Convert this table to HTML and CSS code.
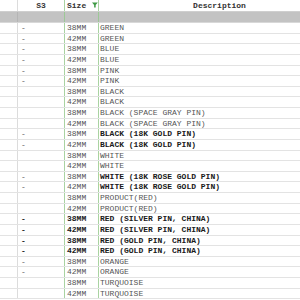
FILE: index.html
```html
<!DOCTYPE html>
<html>
<head>
<meta charset="utf-8">
<link rel="stylesheet" href="styles.css">
</head>
<body>
<div class="sheet">
  <div class="row head">
    <div class="c0"></div>
    <div class="c1 center">S3</div>
    <div class="c2">Size <svg class="filter" width="6" height="6" viewBox="0 0 6 6"><path d="M0 0.5 H6 L3.8 3 V5.5 H2.2 V3 Z" fill="#3f9a45"/></svg></div>
    <div class="c3 desc-head">Description</div>
  </div>
  <div class="row band">
    <div class="c0"></div><div class="c1"></div><div class="c2"></div><div class="c3"></div>
  </div>
  <div class="row"><div class="c0"></div><div class="c1">-</div><div class="c2">38MM</div><div class="c3">GREEN</div></div>
  <div class="row"><div class="c0"></div><div class="c1">-</div><div class="c2">42MM</div><div class="c3">GREEN</div></div>
  <div class="row"><div class="c0"></div><div class="c1">-</div><div class="c2">38MM</div><div class="c3">BLUE</div></div>
  <div class="row"><div class="c0"></div><div class="c1">-</div><div class="c2">42MM</div><div class="c3">BLUE</div></div>
  <div class="row"><div class="c0"></div><div class="c1">-</div><div class="c2">38MM</div><div class="c3">PINK</div></div>
  <div class="row"><div class="c0"></div><div class="c1">-</div><div class="c2">42MM</div><div class="c3">PINK</div></div>
  <div class="row"><div class="c0"></div><div class="c1"></div><div class="c2">38MM</div><div class="c3">BLACK</div></div>
  <div class="row"><div class="c0"></div><div class="c1"></div><div class="c2">42MM</div><div class="c3">BLACK</div></div>
  <div class="row"><div class="c0"></div><div class="c1"></div><div class="c2">38MM</div><div class="c3">BLACK (SPACE GRAY PIN)</div></div>
  <div class="row"><div class="c0"></div><div class="c1"></div><div class="c2">42MM</div><div class="c3">BLACK (SPACE GRAY PIN)</div></div>
  <div class="row"><div class="c0"></div><div class="c1">-</div><div class="c2">38MM</div><div class="c3 b">BLACK (18K GOLD PIN)</div></div>
  <div class="row"><div class="c0"></div><div class="c1">-</div><div class="c2">42MM</div><div class="c3 b">BLACK (18K GOLD PIN)</div></div>
  <div class="row"><div class="c0"></div><div class="c1"></div><div class="c2">38MM</div><div class="c3">WHITE</div></div>
  <div class="row"><div class="c0"></div><div class="c1"></div><div class="c2">42MM</div><div class="c3">WHITE</div></div>
  <div class="row"><div class="c0"></div><div class="c1">-</div><div class="c2">38MM</div><div class="c3 b">WHITE (18K ROSE GOLD PIN)</div></div>
  <div class="row"><div class="c0"></div><div class="c1">-</div><div class="c2">42MM</div><div class="c3 b">WHITE (18K ROSE GOLD PIN)</div></div>
  <div class="row"><div class="c0"></div><div class="c1"></div><div class="c2">38MM</div><div class="c3">PRODUCT(RED)</div></div>
  <div class="row"><div class="c0"></div><div class="c1"></div><div class="c2">42MM</div><div class="c3">PRODUCT(RED)</div></div>
  <div class="row"><div class="c0"></div><div class="c1 b">-</div><div class="c2 b">38MM</div><div class="c3 b">RED (SILVER PIN, CHINA)</div></div>
  <div class="row"><div class="c0"></div><div class="c1 b">-</div><div class="c2 b">42MM</div><div class="c3 b">RED (SILVER PIN, CHINA)</div></div>
  <div class="row"><div class="c0"></div><div class="c1 b">-</div><div class="c2 b">38MM</div><div class="c3 b">RED (GOLD PIN, CHINA)</div></div>
  <div class="row"><div class="c0"></div><div class="c1 b">-</div><div class="c2 b">42MM</div><div class="c3 b">RED (GOLD PIN, CHINA)</div></div>
  <div class="row"><div class="c0"></div><div class="c1">-</div><div class="c2">38MM</div><div class="c3">ORANGE</div></div>
  <div class="row"><div class="c0"></div><div class="c1">-</div><div class="c2">42MM</div><div class="c3">ORANGE</div></div>
  <div class="row"><div class="c0"></div><div class="c1"></div><div class="c2">38MM</div><div class="c3">TURQUOISE</div></div>
  <div class="row"><div class="c0"></div><div class="c1"></div><div class="c2">42MM</div><div class="c3">TURQUOISE</div></div>
</div>
</body>
</html>
```
FILE: styles.css
```css
html, body {
  margin: 0;
  padding: 0;
  background: #ffffff;
  overflow: hidden;
}
.sheet {
  width: 300px;
  font-family: "Liberation Mono", "DejaVu Sans Mono", monospace;
  font-size: 8px;
  color: #555555;
}
.row {
  display: grid;
  grid-template-columns: 18px 47px 34px 1fr;
  height: 10.64px;
  line-height: 10px;
  box-sizing: border-box;
  border-bottom: 1px solid #e3e3e3;
  white-space: nowrap;
}
.row > div {
  overflow: hidden;
}
.c0 {
  border-right: 1px solid #dcdcdc;
}
.c1 {
  border-right: 1px solid #a9d3a2;
  padding-left: 3px;
}
.c2 {
  border-right: 1px solid #a9d3a2;
  padding-left: 2px;
}
.c3 {
  padding-left: 1px;
}
.b {
  font-weight: bold;
  color: #1a1a1a;
}
.head {
  height: 12px;
  line-height: 12px;
  font-weight: bold;
  color: #333333;
  border-bottom: 1px solid #cfcfcf;
}
.head .c1.center {
  text-align: center;
  padding-left: 0;
}
.head .c2 {
  display: flex;
  align-items: center;
}
.filter {
  margin-left: 6px;
  margin-top: -1px;
}
.desc-head {
  text-align: center;
  padding-left: 40px;
}
.band {
  height: 11px;
  background: #c3c3c3;
  border-bottom: 1px solid #d8d8d8;
}
.band .c0 {
  border-right-color: #b5b5b5;
}
.band .c1, .band .c2 {
  border-right-color: #9cc896;
}
```
